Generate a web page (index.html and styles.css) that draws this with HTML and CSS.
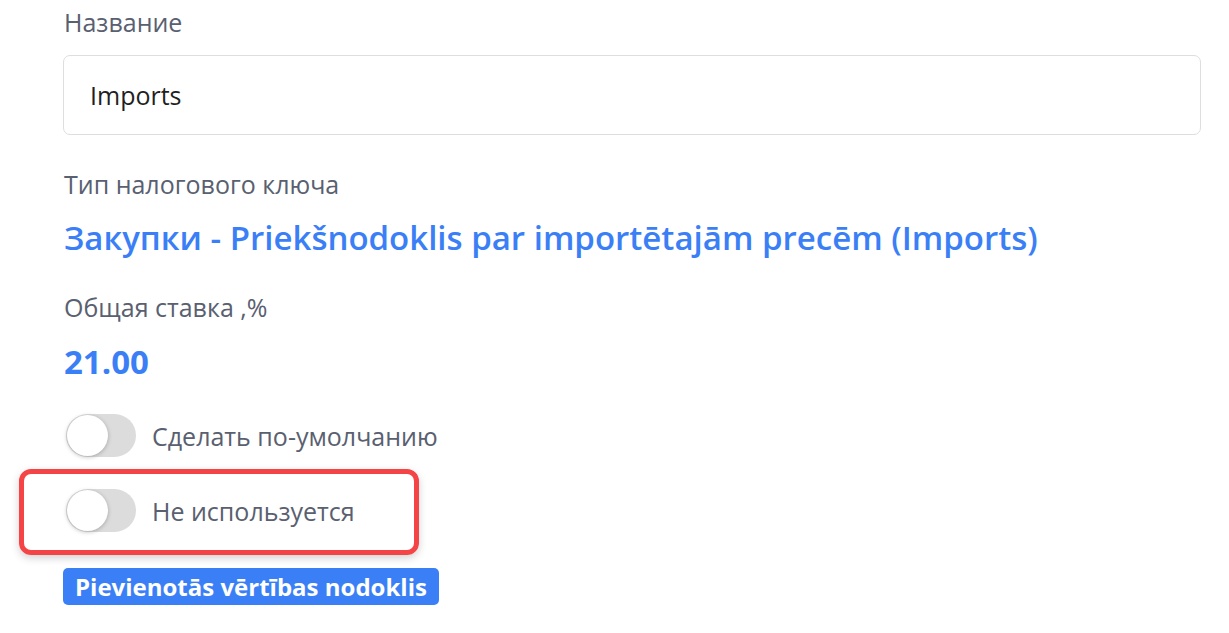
FILE: index.html
```html
<!DOCTYPE html>
<html lang="ru">
<head>
<meta charset="utf-8">
<link rel="stylesheet" href="styles.css">
</head>
<body>
<div class="form">
  <div class="label first">Название</div>
  <div class="input">Imports</div>
  <div class="label gap">Тип налогового ключа</div>
  <div class="value title">Закупки - Priekšnodoklis par importētajām precēm (Imports)</div>
  <div class="label gap">Общая ставка ,%</div>
  <div class="value rate">21.00</div>
  <div class="toggle-row row1">
    <span class="switch"><span class="knob"></span></span>
    <span class="toggle-text">Сделать по-умолчанию</span>
  </div>
  <div class="highlight">
    <div class="toggle-row">
      <span class="switch"><span class="knob"></span></span>
      <span class="toggle-text">Не используется</span>
    </div>
  </div>
  <div class="badge">Pievienotās vērtības nodoklis</div>
</div>
</body>
</html>
```
FILE: styles.css
```css
html, body {
  margin: 0;
  padding: 0;
  background: #fff;
}
body {
  font-family: "Open Sans", "Liberation Sans", sans-serif;
  color: #222;
}
.form {
  padding: 7px 28px 0 64px;
  display: flex;
  flex-direction: column;
  align-items: flex-start;
}
.label {
  font-size: 25px;
  line-height: 30px;
  color: #596070;
}
.label.gap {
  margin-top: 34px;
}
.input {
  align-self: stretch;
  margin-top: 18px;
  margin-left: -1px;
  height: 80px;
  box-sizing: border-box;
  border: 1px solid #dedede;
  border-radius: 7px;
  padding: 0 0 0 26px;
  display: flex;
  align-items: center;
  font-size: 25px;
  color: #1f1f1f;
}
.value {
  color: #3b7ff6;
  font-size: 33px;
  line-height: 40px;
  font-weight: 600;
}
.title {
  margin-top: 19px;
}
.rate {
  margin-top: 20px;
  font-weight: 700;
}
.toggle-row {
  display: flex;
  align-items: center;
  gap: 16px;
}
.row1 {
  margin-top: 32px;
}
.switch {
  position: relative;
  width: 70px;
  height: 43px;
  border-radius: 22px;
  background: #dcdcdc;
  margin-left: 2px;
  flex: none;
}
.knob {
  position: absolute;
  left: 1px;
  top: 1px;
  width: 41px;
  height: 41px;
  border-radius: 50%;
  background: #fff;
  box-shadow: 0 1px 4px rgba(0,0,0,0.25);
}
.toggle-text {
  font-size: 25px;
  color: #596070;
}
.highlight {
  margin-top: 12px;
  margin-left: -45px;
  width: 400px;
  height: 86px;
  box-sizing: border-box;
  border: 5px solid #f44446;
  border-radius: 12px;
  padding: 15px 0 0 40px;
  box-shadow: 0 3px 8px rgba(0,0,0,0.18);
}
.badge {
  margin-top: 13px;
  margin-left: -1px;
  background: #3b7ff6;
  color: #fff;
  font-size: 24px;
  font-weight: 700;
  line-height: 37px;
  padding: 0 12px;
  border-radius: 5px;
}
```
